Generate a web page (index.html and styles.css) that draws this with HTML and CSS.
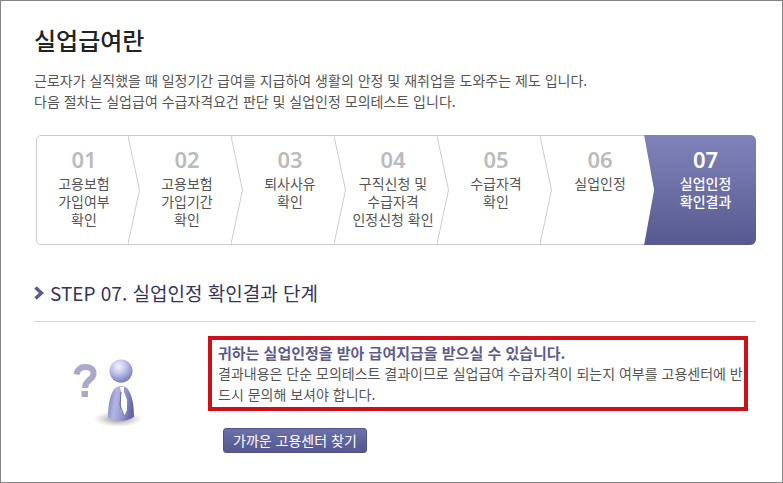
FILE: index.html
```html
<!DOCTYPE html>
<html lang="ko">
<head>
    <meta charset="UTF-8">
    <meta name="viewport" content="width=device-width, initial-scale=1.0">
    <title>실업급여란</title>
    <link rel="stylesheet" href="styles.css">
</head>
<body>
    <main class="page">
        <h1>실업급여란</h1>
        <p class="intro">근로자가 실직했을 때 일정기간 급여를 지급하여 생활의 안정 및 재취업을 도와주는 제도 입니다.<br>다음 절차는 실업급여 수급자격요건 판단 및 실업인정 모의테스트 입니다.</p>

        <ol class="steps">
            <li>
                <div class="step-text"><strong>01</strong><span>고용보험<br>가입여부<br>확인</span></div>
                <svg class="divider" viewBox="0 0 12 108" preserveAspectRatio="none"><path d="M0 0L11.5 54L0 108"/></svg>
            </li>
            <li>
                <div class="step-text"><strong>02</strong><span>고용보험<br>가입기간<br>확인</span></div>
                <svg class="divider" viewBox="0 0 12 108" preserveAspectRatio="none"><path d="M0 0L11.5 54L0 108"/></svg>
            </li>
            <li>
                <div class="step-text"><strong>03</strong><span>퇴사사유<br>확인</span></div>
                <svg class="divider" viewBox="0 0 12 108" preserveAspectRatio="none"><path d="M0 0L11.5 54L0 108"/></svg>
            </li>
            <li>
                <div class="step-text"><strong>04</strong><span>구직신청 및<br>수급자격<br>인정신청 확인</span></div>
                <svg class="divider" viewBox="0 0 12 108" preserveAspectRatio="none"><path d="M0 0L11.5 54L0 108"/></svg>
            </li>
            <li>
                <div class="step-text"><strong>05</strong><span>수급자격<br>확인</span></div>
                <svg class="divider" viewBox="0 0 12 108" preserveAspectRatio="none"><path d="M0 0L11.5 54L0 108"/></svg>
            </li>
            <li>
                <div class="step-text"><strong>06</strong><span>실업인정</span></div>
            </li>
            <li class="active" aria-current="step">
                <div class="step-text"><strong>07</strong><span>실업인정<br>확인결과</span></div>
            </li>
        </ol>

        <h2>
            <svg class="arrow" width="10" height="14" viewBox="0 0 10 14"><path d="M1.5 1.5L7.5 7L1.5 12.5" fill="none" stroke="#5b5b92" stroke-width="3.5"/></svg>
            STEP 07. 실업인정 확인결과 단계
        </h2>

        <section class="result">
            <svg class="person" width="74" height="76" viewBox="0 0 74 76" aria-hidden="true">
                <defs>
                    <radialGradient id="head" cx="0.4" cy="0.3" r="0.7">
                        <stop offset="0" stop-color="#f4f4ff"/>
                        <stop offset="0.45" stop-color="#c3c5ec"/>
                        <stop offset="1" stop-color="#7b7dbd"/>
                    </radialGradient>
                    <linearGradient id="body" x1="0" x2="1" y1="0" y2="0.2">
                        <stop offset="0" stop-color="#7375b4"/>
                        <stop offset="0.35" stop-color="#b4b7e4"/>
                        <stop offset="0.7" stop-color="#9295cd"/>
                        <stop offset="1" stop-color="#6668a6"/>
                    </linearGradient>
                    <radialGradient id="shadow">
                        <stop offset="0" stop-color="#55555c" stop-opacity="0.7"/>
                        <stop offset="1" stop-color="#999" stop-opacity="0"/>
                    </radialGradient>
                </defs>
                <!-- question mark -->
                <path d="M3.5 16.500C4.500 11 8 9 12.500 9C18 9 21 12 20.500 16C20 22 12 22 12 30" fill="none" stroke="#aaa9c9" stroke-width="6"/>
                <rect x="8.500" y="33" width="6.500" height="6" fill="#aaa9c9"/>
                <!-- figure -->
                <ellipse cx="45" cy="61" rx="25" ry="8" fill="url(#shadow)"/>
                <path d="M42 30Q48 26 54 30C59 36 61 46 61 59Q48 67 35 59C35 46 37 36 42 30Z" fill="url(#body)"/>
                <path d="M47 29L51 29L51 34L54 42L54 52L51 58L48 52L48 34Z" fill="#fff"/>
                <path d="M48 34L47 47L51 58" fill="none" stroke="#686aa4" stroke-width="1"/>
                <circle cx="48" cy="13" r="11.500" fill="url(#head)"/>
            </svg>
            <div class="result-body">
                <div class="notice">
                    <strong>귀하는 실업인정을 받아 급여지급을 받으실 수 있습니다.</strong>
                    <p>결과내용은 단순 모의테스트 결과이므로 실업급여 수급자격이 되는지 여부를 고용센터에 반드시 문의해 보셔야 합니다.</p>
                </div>
                <button type="button">가까운 고용센터 찾기</button>
            </div>
        </section>
    </main>
</body>
</html>
```
FILE: styles.css
```css
* {
    margin: 0;
    padding: 0;
    box-sizing: border-box;
}

body {
    font-family: "Noto Sans CJK KR", sans-serif;
    font-size: 14px;
    line-height: 21px;
    color: #555;
    background: #fff;
}

.page {
    min-height: 100vh;
    padding: 22px 26px 20px 33px;
    border: 1px solid #858585;
}

h1 {
    font-size: 24px;
    line-height: 34px;
    font-weight: 500;
    color: #222;
}

.intro {
    margin-top: 13px;
}

.steps {
    display: flex;
    height: 110px;
    margin: 23px 0 0 2px;
    list-style: none;
    border: 1px solid #ccc;
    border-radius: 5px;
}

.steps li {
    display: flex;
    flex: 104;
}

.step-text {
    display: flex;
    flex: 1;
    flex-direction: column;
    padding: 11px 0 0 3px;
    text-align: center;
    line-height: 18px;
    white-space: nowrap;
}

.step-text strong {
    font-family: "Noto Sans", sans-serif;
    font-size: 22px;
    line-height: 24px;
    font-weight: 600;
    color: #bbb;
    margin-bottom: 3px;
}

.divider {
    width: 12px;
    height: 100%;
    fill: none;
    stroke: #ccc;
}

.steps li:nth-child(6) {
    flex: 94;
}

.steps .active {
    flex: 113;
    margin: -1px;
    background: linear-gradient(#8084ba, #565a8e);
    border-radius: 0 6px 6px 0;
    clip-path: polygon(0 0, 100% 0, 100% 100%, 0 100%, 10px 50%);
}

.active .step-text {
    padding: 12px 0 0 11px;
    font-weight: 500;
    color: #fff;
}

.active strong {
    color: #fff;
}

h2 {
    display: flex;
    align-items: center;
    gap: 6px;
    margin-top: 33px;
    padding-bottom: 13px;
    font-size: 19px;
    line-height: 30px;
    font-weight: 400;
    color: #34345c;
    border-bottom: 1px solid #d5d5d5;
}

.result {
    display: flex;
    gap: 61px;
    padding: 14px 8px 0 39px;
}

.person {
    flex: none;
    margin-top: 22px;
}

.result-body {
    flex: 1;
}

.notice {
    padding: 2px 0 2px 6px;
    border: 4px solid #cf1018;
}

.notice strong {
    display: block;
    font-size: 15px;
    color: #5c5c8c;
}

button {
    height: 25px;
    margin: 17px 0 0 15px;
    padding: 0 9px;
    font: inherit;
    color: #fff;
    background: linear-gradient(#6c70aa, #54588f);
    border: 1px solid #50548a;
    border-radius: 3px;
}
```
